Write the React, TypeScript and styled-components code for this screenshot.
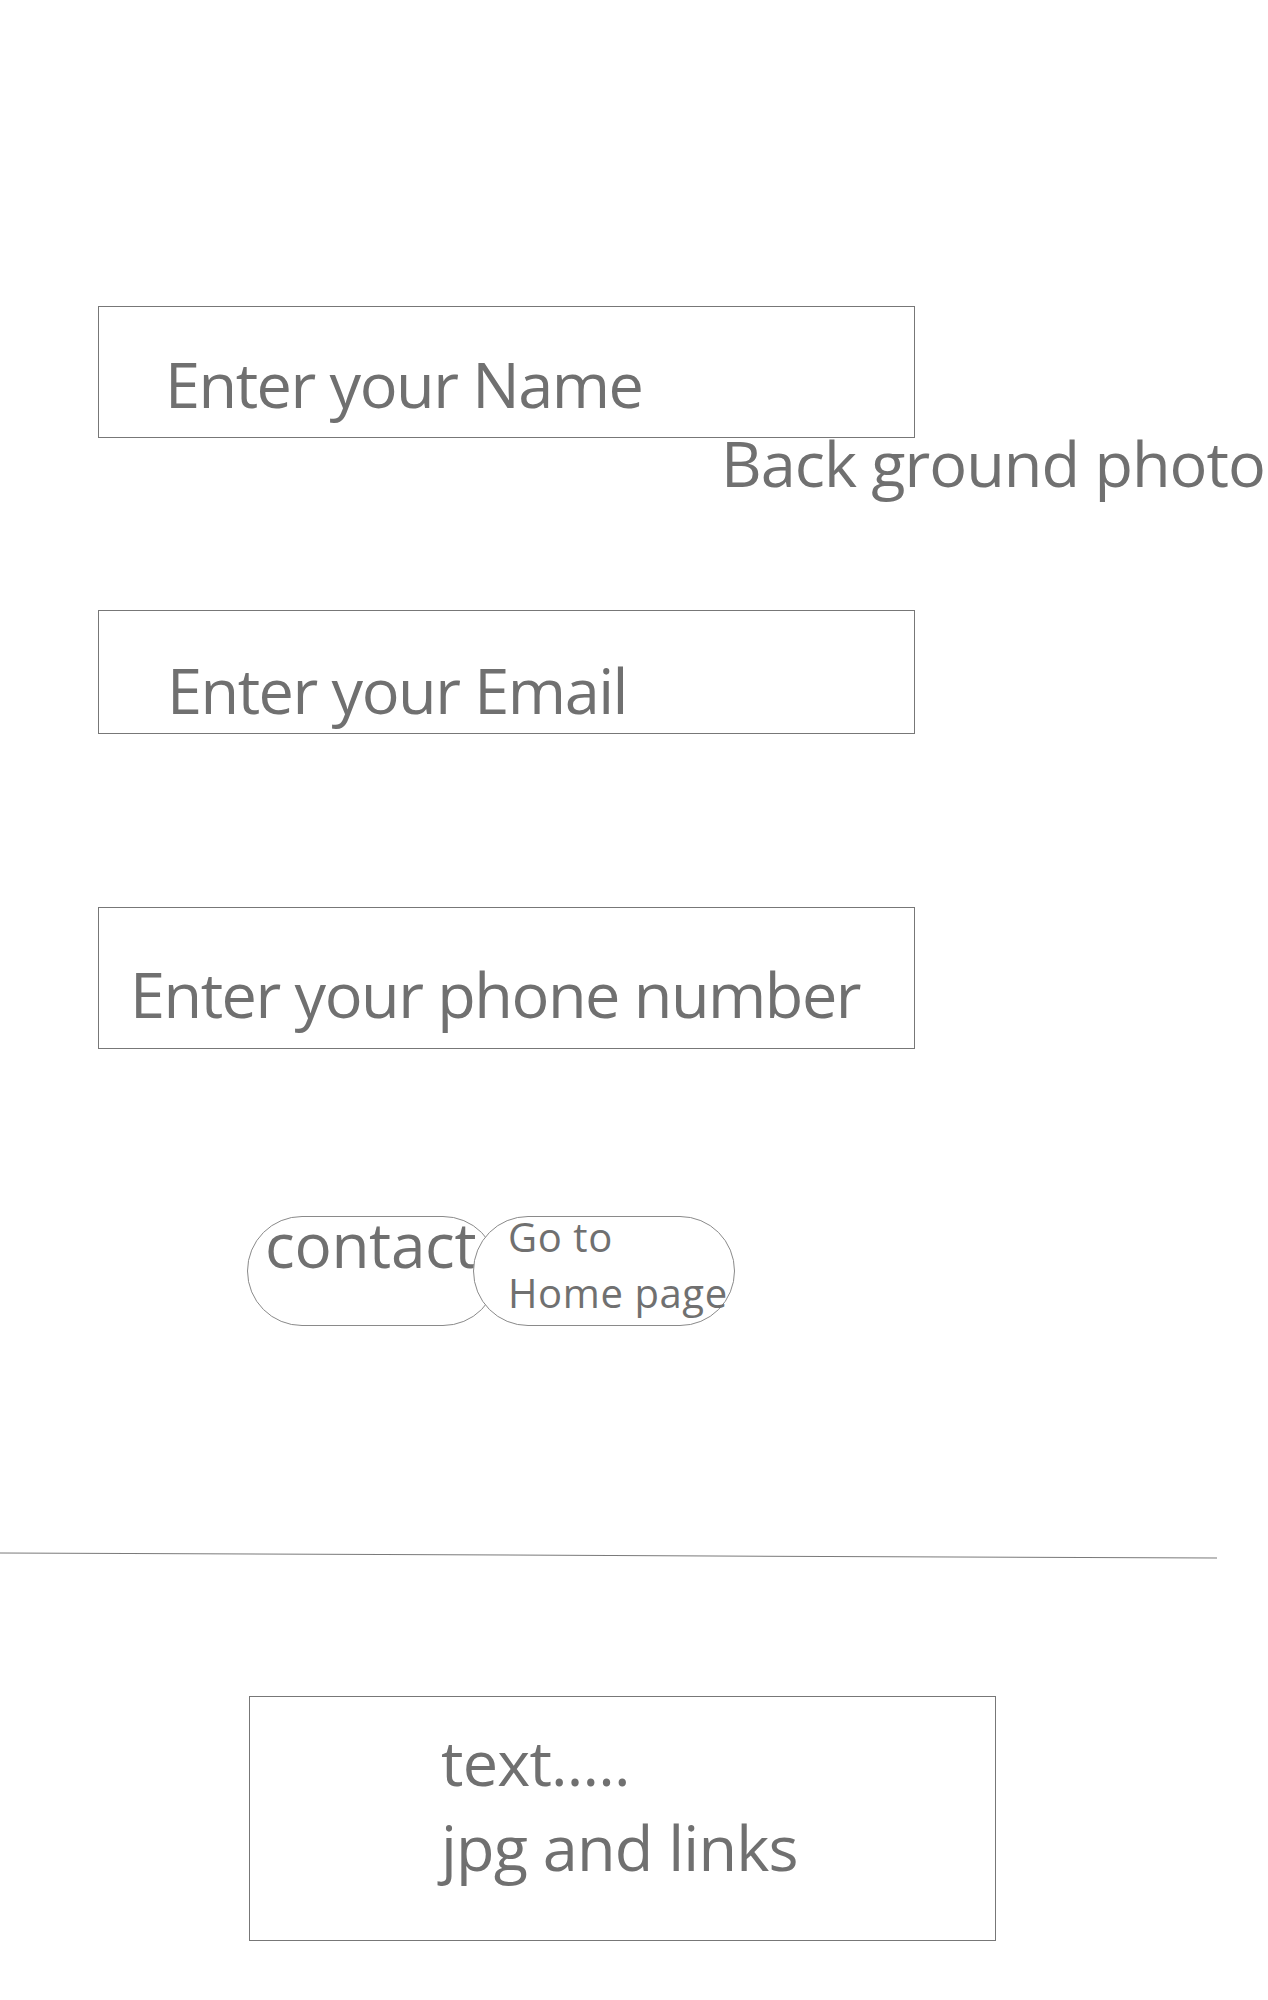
import React from 'react';
import styled, { createGlobalStyle } from 'styled-components';

const GlobalStyle = createGlobalStyle`
  body {
    margin: 0;
    background: #fff;
    color: #707070;
    font-family: "Open Sans", "Noto Sans", sans-serif;
  }
`;

const fields = [
  { label: 'Enter your Name', height: 132, top: 45, left: 66, gap: 0 },
  { label: 'Enter your Email', height: 124, top: 47, left: 68, gap: 116 },
  { label: 'Enter your phone number', height: 142, top: 54, left: 31, gap: 173 },
];

const App = () => {
  return (
    <Page>
      <GlobalStyle />
      <Form>
        {fields.map((f, i) => (
          <React.Fragment key={f.label}>
            <Field $height={f.height} $top={f.top} $left={f.left} $gap={f.gap}>
              <BigText>{f.label}</BigText>
            </Field>
            {i === 0 && <Caption>Back ground photo</Caption>}
          </React.Fragment>
        ))}
        <Actions>
          <ContactButton>
            <ContactLabel>contact</ContactLabel>
          </ContactButton>
          <HomeButton>
            <HomeLabel>
              Go to
              <br />
              Home page
            </HomeLabel>
          </HomeButton>
        </Actions>
      </Form>
      <Divider />
      <FooterCard>
        <FooterLine>text.....</FooterLine>
        <FooterLine>jpg and links</FooterLine>
      </FooterCard>
    </Page>
  );
};

const Page = styled.main`
  padding-top: 306px;
  padding-bottom: 59px;
`;

const Form = styled.section`
  margin-left: 98px;
  width: 817px;
  display: flex;
  flex-direction: column;
`;

const Field = styled.div<{ $height: number; $top: number; $left: number; $gap: number }>`
  box-sizing: border-box;
  height: ${(p) => p.$height}px;
  margin-top: ${(p) => p.$gap}px;
  padding: ${(p) => p.$top}px 0 0 ${(p) => p.$left}px;
  border: 1px solid #777;
`;

const BigText = styled.span`
  display: block;
  font-size: 63px;
  line-height: 1;
  letter-spacing: -1.5px;
  white-space: nowrap;
`;

const Caption = styled(BigText)`
  margin: -7px 0 0 623px;
  letter-spacing: -1px;
`;

const Actions = styled.div`
  display: flex;
  align-items: flex-start;
  margin-top: 167px;
  padding-left: 149px;
`;

const Pill = styled.button`
  box-sizing: border-box;
  display: flex;
  align-items: flex-start;
  height: 110px;
  margin: 0;
  border: 1px solid #8a8a8a;
  border-radius: 55px;
  background: #fff;
  color: #707070;
  font-family: inherit;
  text-align: left;
  cursor: pointer;
`;

const ContactButton = styled(Pill)`
  width: 251px;
  padding: 0 0 0 17px;
`;

const HomeButton = styled(Pill)`
  width: 262px;
  margin-left: -25px;
  padding: 0 0 0 34px;
`;

const ContactLabel = styled.span`
  display: block;
  font-size: 62px;
  line-height: 54px;
  letter-spacing: -0.3px;
`;

const HomeLabel = styled.span`
  display: block;
  margin-top: -8px;
  font-size: 40px;
  line-height: 56px;
  letter-spacing: 0.6px;
  white-space: nowrap;
`;

const Divider = styled.hr`
  width: 1217px;
  height: 1px;
  margin: 229px 0 0;
  border: 0;
  background: #7a7a7a;
  transform: rotate(0.235deg);
`;

const FooterCard = styled.section`
  box-sizing: border-box;
  width: 747px;
  height: 245px;
  margin: 140px 0 0 249px;
  padding: 22px 0 0 191px;
  border: 1px solid #777;
`;

const FooterLine = styled.p`
  margin: 0;
  font-size: 63px;
  line-height: 85px;
  letter-spacing: -0.8px;
  white-space: nowrap;
`;

export default App;
